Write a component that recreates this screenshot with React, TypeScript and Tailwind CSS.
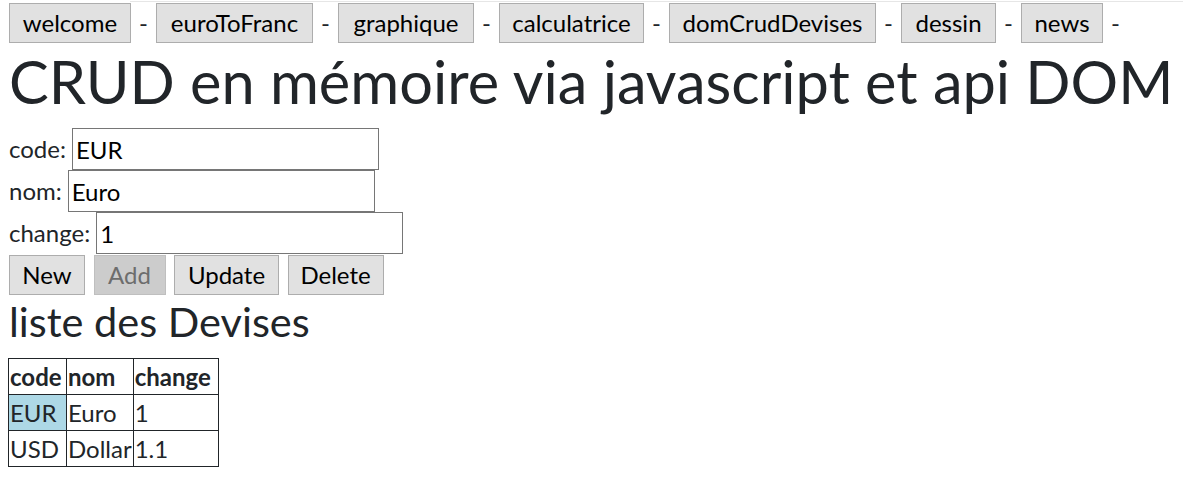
const navItems = [
  { label: "welcome", w: "w-[122px]" },
  { label: "euroToFranc", w: "w-[157px]" },
  { label: "graphique", w: "w-[136px]" },
  { label: "calculatrice", w: "w-[145px]" },
  { label: "domCrudDevises", w: "w-[207px]" },
  { label: "dessin", w: "w-[95px]" },
  { label: "news", w: "w-[82px]" },
];

const devises = [
  { code: "EUR", nom: "Euro", change: "1", selected: true },
  { code: "USD", nom: "Dollar", change: "1.1", selected: false },
];

const btn = "h-[40px] border border-[#adadad] bg-[#e1e1e1] text-black text-[24px] leading-none";
const cell = "h-[35px] border border-[#212529] px-[1px] py-0 leading-[35px]";

function Field({ label, value }: { label: string; value: string }) {
  return (
    <div className="flex h-[42px] items-center pl-[9px]">
      <label className="mr-[6px]">{label}</label>
      <input
        type="text"
        defaultValue={value}
        className="h-[42px] w-[307px] border border-[#767676] bg-white px-[3px] text-[24px] text-black outline-none"
      />
    </div>
  );
}

export default function App() {
  return (
    <div className="min-h-screen bg-white font-['Lato',sans-serif] text-[24px] text-[#212529]">
      <div className="h-[1px] mt-[1px] ml-[130px] bg-[#e6e6e6]" />
      <nav className="flex h-[41px] items-start pl-[9px] pt-[1px]">
        {navItems.map((item) => (
          <div key={item.label} className="flex items-center">
            <button className={`${btn} ${item.w}`}>{item.label}</button>
            <span className="w-[25px] text-center">-</span>
          </div>
        ))}
      </nav>

      <h1 className="mb-[11px] pl-[9px] pt-[2px] text-[59.5px] leading-[72px] whitespace-nowrap">
        CRUD en mémoire via javascript et api DOM
      </h1>

      <Field label="code:" value="EUR" />
      <Field label="nom:" value="Euro" />
      <Field label="change:" value="1" />

      <div className="mt-[1px] flex gap-[8.5px] pl-[9px]">
        <button className={`${btn} w-[76px]`}>New</button>
        <button disabled className="h-[40px] w-[72px] border border-[#bfbfbf] bg-[#cccccc] text-[24px] leading-none text-[#6d6d6d]">
          Add
        </button>
        <button className={`${btn} w-[105px]`}>Update</button>
        <button className={`${btn} w-[96px]`}>Delete</button>
      </div>

      <h2 className="mb-[12px] mt-[1px] pl-[9px] text-[41.5px] leading-[50px]">liste des Devises</h2>

      <table className="ml-[8px] border-collapse border border-[#212529]">
        <thead>
          <tr>
            <th className={`${cell} w-[58px] text-left font-bold`}>code</th>
            <th className={`${cell} w-[66px] text-left font-bold`}>nom</th>
            <th className={`${cell} w-[85px] text-left font-bold`}>change</th>
          </tr>
        </thead>
        <tbody>
          {devises.map((d) => (
            <tr key={d.code}>
              <td className={`${cell} ${d.selected ? "bg-[#add8e6]" : ""}`}>{d.code}</td>
              <td className={cell}>{d.nom}</td>
              <td className={cell}>{d.change}</td>
            </tr>
          ))}
        </tbody>
      </table>
    </div>
  );
}
